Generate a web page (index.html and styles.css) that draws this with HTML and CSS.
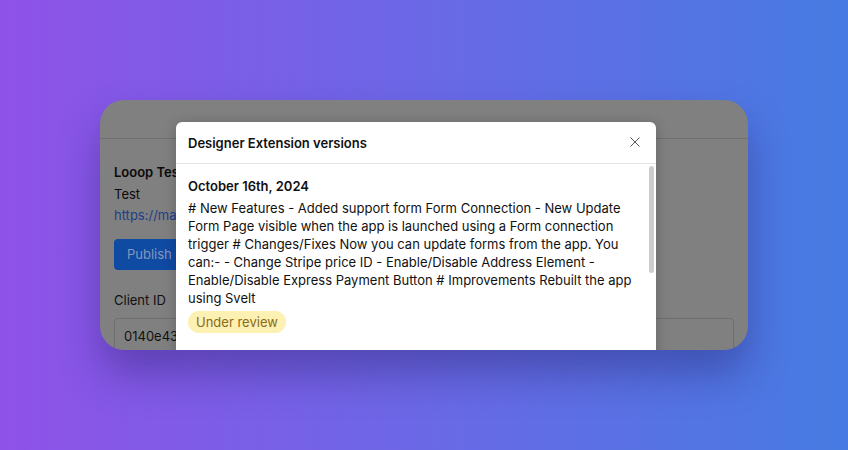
FILE: index.html
```html
<!DOCTYPE html>
<html lang="en">
<head>
<meta charset="utf-8">
<title>Designer Extension versions</title>
<link rel="stylesheet" href="styles.css">
</head>
<body>
<div class="stage">
  <div class="window">
    <div class="win-header"></div>
    <div class="win-content">
      <div class="app-name">Looop Test App</div>
      <div class="app-desc">Test</div>
      <a class="app-link" href="#">https://marketplace.webflow.com</a>
      <div class="publish" role="button">Publish changes</div>
      <label class="field-label">Client ID</label>
      <div class="field-input">0140e43a9f2b7c1d8e5f6a3b2c9d0e1f</div>
    </div>
    <div class="modal">
      <div class="modal-header">
        <span class="modal-title">Designer Extension versions</span>
        <svg class="close" width="10" height="10" viewBox="0 0 10 10"><path d="M0.5 0.5L9.5 9.5M9.5 0.5L0.5 9.5" stroke="#555" stroke-width="1" fill="none"/></svg>
      </div>
      <div class="modal-body">
        <div class="version-date">October 16th, 2024</div>
        <p class="version-notes"># New Features - Added support form Form Connection - New Update Form Page visible when the app is launched using a Form connection trigger # Changes/Fixes Now you can update forms from the app. You can:- - Change Stripe price ID - Enable/Disable Address Element - Enable/Disable Express Payment Button # Improvements Rebuilt the app using Svelt</p>
        <span class="badge">Under review</span>
        <div class="scrollbar"></div>
      </div>
    </div>
  </div>
</div>
</body>
</html>
```

FILE: styles.css
```css
html, body {
  margin: 0;
  padding: 0;
}
body {
  width: 848px;
  height: 450px;
  overflow: hidden;
  font-family: Inter, "Noto Sans", sans-serif;
  background: linear-gradient(90deg, #8f52e8 0%, #6b68e6 50%, #467be2 100%);
}
.stage {
  padding-top: 100px;
  display: flex;
  justify-content: center;
}
.window {
  position: relative;
  width: 648px;
  height: 250px;
  border-radius: 24px;
  overflow: hidden;
  background: #808080;
  box-shadow: 0 24px 40px rgba(30, 20, 90, 0.35);
}
.win-header {
  height: 38px;
  border-bottom: 1px solid #6f6f6f;
}
.win-content {
  padding: 22px 14px 0;
  display: flex;
  flex-direction: column;
  align-items: flex-start;
  font-size: 13px;
  color: #0a0a0a;
  line-height: 22px;
}
.app-name {
  font-weight: 600;
}
.app-desc {
  line-height: 22px;
}
.app-link {
  color: #1d3f8a;
  text-decoration: none;
  line-height: 21px;
}
.publish {
  margin-top: 13px;
  height: 31px;
  line-height: 31px;
  padding: 0 13px;
  border-radius: 4px;
  background-color: #0f4aa3;
  color: #8597bb;
  font-size: 13px;
  white-space: nowrap;
}
.field-label {
  margin-top: 19px;
  line-height: 22px;
  color: #111;
}
.field-input {
  margin-top: 7px;
  width: 620px;
  box-sizing: border-box;
  height: 36px;
  padding: 0 9px;
  border: 1px solid #6e6e6e;
  border-radius: 4px;
  line-height: 34px;
  color: #111;
}
.modal {
  position: absolute;
  left: 76px;
  top: 22px;
  width: 480px;
  height: 300px;
  background: #fff;
  border-radius: 6px 6px 0 0;
  box-shadow: 0 2px 14px rgba(0, 0, 0, 0.22);
}
.modal-header {
  height: 42px;
  box-sizing: border-box;
  border-bottom: 1px solid #e3e3e3;
  display: flex;
  align-items: center;
  justify-content: space-between;
  padding: 0 16px 0 12px;
}
.modal-title {
  font-size: 13px;
  font-weight: 600;
  color: #111;
}
.close {
  display: block;
  margin-top: -2px;
}
.modal-body {
  position: relative;
  padding: 13px 16px 12px 12px;
  color: #111;
  font-size: 13px;
}
.version-date {
  font-weight: 600;
  line-height: 18px;
}
.version-notes {
  margin: 4px 0 0;
  line-height: 18px;
}
.badge {
  display: inline-block;
  margin-top: 4px;
  height: 22px;
  line-height: 22px;
  padding: 0 8px;
  border-radius: 11px;
  background: #fdf0b3;
  color: #8a6b17;
}
.scrollbar {
  position: absolute;
  right: 2px;
  top: 2px;
  width: 5px;
  height: 107px;
  border-radius: 3px;
  background: #cdcdcd;
}
```
